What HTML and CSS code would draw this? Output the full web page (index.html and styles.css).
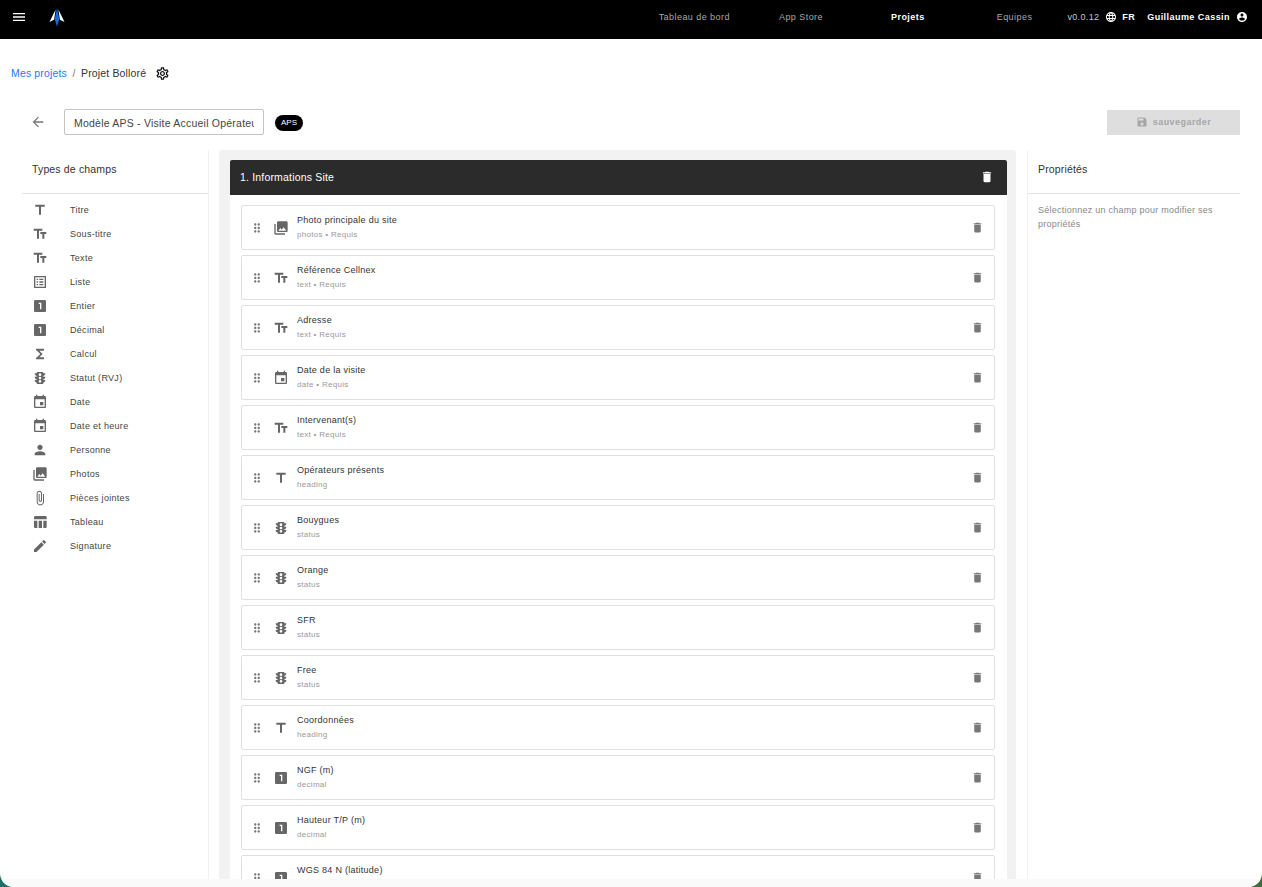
FILE: index.html
```html
<!DOCTYPE html>
<html lang="fr">
<head>
    <meta charset="UTF-8">
    <title>Projet Bolloré</title>
    <link rel="stylesheet" href="styles.css">
</head>
<body>
    <svg class="sprite" width="0" height="0">
        <symbol id="i-title" viewBox="0 0 24 24"><path d="M5 4v3h5.5v12h3V7H19V4z"/></symbol>
        <symbol id="i-text" viewBox="0 0 24 24"><path d="M2.5 4v3h5v12h3V7h5V4h-13zm19 5h-9v3h3v7h3v-7h3V9z"/></symbol>
        <symbol id="i-list" viewBox="0 0 24 24"><path d="M19 5v14H5V5h14m1.1-2H3.9c-.5 0-.9.4-.9.9v16.2c0 .4.4.9.9.9h16.2c.4 0 .9-.5.9-.9V3.9c0-.5-.5-.9-.9-.9zM11 7h6v2h-6V7zm0 4h6v2h-6v-2zm0 4h6v2h-6zM7 7h2v2H7zm0 4h2v2H7zm0 4h2v2H7z"/></symbol>
        <symbol id="i-one" viewBox="0 0 24 24"><path d="M19 3H5c-1.1 0-2 .9-2 2v14c0 1.1.9 2 2 2h14c1.1 0 2-.9 2-2V5c0-1.1-.9-2-2-2zm-5 14h-2V9h-2V7h4v10z"/></symbol>
        <symbol id="i-sum" viewBox="0 0 24 24"><path d="M18 4H6v2l6.5 6L6 18v2h12v-3h-7l5-5-5-5h7z"/></symbol>
        <symbol id="i-traffic" viewBox="0 0 24 24"><path d="M20 10h-3V8.86c1.72-.45 3-2 3-3.86h-3V4c0-.55-.45-1-1-1H8c-.55 0-1 .45-1 1v1H4c0 1.86 1.28 3.41 3 3.86V10H4c0 1.86 1.28 3.41 3 3.86V15H4c0 1.86 1.28 3.41 3 3.86V20c0 .55.45 1 1 1h8c.55 0 1-.45 1-1v-1.14c1.72-.45 3-2 3-3.86h-3v-1.14c1.72-.45 3-2 3-3.86zm-8 9c-1.11 0-2-.9-2-2s.89-2 2-2c1.1 0 2 .9 2 2s-.89 2-2 2zm0-5c-1.11 0-2-.9-2-2s.89-2 2-2c1.1 0 2 .9 2 2s-.89 2-2 2zm0-5c-1.11 0-2-.9-2-2 0-1.11.89-2 2-2 1.1 0 2 .89 2 2 0 1.1-.89 2-2 2z"/></symbol>
        <symbol id="i-event" viewBox="0 0 24 24"><path d="M17 12h-5v5h5v-5zM16 1v2H8V1H6v2H5c-1.11 0-1.99.9-1.99 2L3 19c0 1.1.89 2 2 2h14c1.1 0 2-.9 2-2V5c0-1.1-.9-2-2-2h-1V1h-2zm3 18H5V8h14v11z"/></symbol>
        <symbol id="i-person" viewBox="0 0 24 24"><path d="M12 12c2.21 0 4-1.79 4-4s-1.79-4-4-4-4 1.79-4 4 1.79 4 4 4zm0 2c-2.67 0-8 1.34-8 4v2h16v-2c0-2.66-5.33-4-8-4z"/></symbol>
        <symbol id="i-photos" viewBox="0 0 24 24"><path d="M22 16V4c0-1.1-.9-2-2-2H8c-1.1 0-2 .9-2 2v12c0 1.1.9 2 2 2h12c1.1 0 2-.9 2-2zm-11-4l2.03 2.71L16 11l4 5H8l3-4zM2 6v14c0 1.1.9 2 2 2h14v-2H4V6H2z"/></symbol>
        <symbol id="i-attach" viewBox="0 0 24 24"><path d="M16.5 6v11.5c0 2.21-1.79 4-4 4s-4-1.79-4-4V5c0-1.38 1.12-2.5 2.5-2.5s2.5 1.12 2.5 2.5v10.5c0 .55-.45 1-1 1s-1-.45-1-1V6H10v9.5c0 1.38 1.12 2.5 2.5 2.5s2.5-1.12 2.5-2.5V5c0-2.21-1.79-4-4-4S7 2.79 7 5v12.5c0 3.04 2.46 5.5 5.5 5.5s5.5-2.46 5.5-5.5V6h-1.5z"/></symbol>
        <symbol id="i-table" viewBox="0 0 24 24"><path d="M10 10.02h5V21h-5zM17 21h3c1.1 0 2-.9 2-2v-9h-5v11zm3-18H5c-1.1 0-2 .9-2 2v3h19V5c0-1.1-.9-2-2-2zM3 19c0 1.1.9 2 2 2h3V10H3v9z"/></symbol>
        <symbol id="i-pen" viewBox="0 0 24 24"><path d="M3 17.25V21h3.75L17.81 9.94l-3.75-3.75L3 17.25zM20.71 7.04c.39-.39.39-1.02 0-1.41l-2.34-2.34a.9959.9959 0 0 0-1.41 0l-1.83 1.83 3.75 3.75 1.83-1.83z"/></symbol>
        <symbol id="i-drag" viewBox="0 0 24 24"><path d="M11 18c0 1.1-.9 2-2 2s-2-.9-2-2 .9-2 2-2 2 .9 2 2zm-2-8c-1.1 0-2 .9-2 2s.9 2 2 2 2-.9 2-2-.9-2-2-2zm0-6c-1.1 0-2 .9-2 2s.9 2 2 2 2-.9 2-2-.9-2-2-2zm6 4c1.1 0 2-.9 2-2s-.9-2-2-2-2 .9-2 2 .9 2 2 2zm0 2c-1.1 0-2 .9-2 2s.9 2 2 2 2-.9 2-2-.9-2-2-2zm0 6c-1.1 0-2 .9-2 2s.9 2 2 2 2-.9 2-2-.9-2-2-2z"/></symbol>
        <symbol id="i-delete" viewBox="0 0 24 24"><path d="M6 19c0 1.1.9 2 2 2h8c1.1 0 2-.9 2-2V7H6v12zM19 4h-3.5l-1-1h-5l-1 1H5v2h14V4z"/></symbol>
    </svg>

    <div class="window">
        <header class="topbar">
            <svg class="menu-icon" viewBox="0 0 24 24"><path d="M3 18h18v-2H3v2zm0-5h18v-2H3v2zm0-7v2h18V6H3z"/></svg>
            <svg class="logo" viewBox="0 0 16 19">
                <path fill="#fff" d="M6.6 1.5 0.5 14l4.6-2.2z"/>
                <path fill="#fff" d="M9.4 1.5 15.5 14l-4.6-2.2z"/>
                <path fill="#1668e3" d="M8 0 10.3 11 8 18.5 5.7 11z"/>
            </svg>
            <nav class="nav-links">
                <a class="nav-link nav-dashboard">Tableau de bord</a>
                <a class="nav-link nav-store">App Store</a>
                <a class="nav-link nav-projects active">Projets</a>
                <a class="nav-link nav-teams">Equipes</a>
            </nav>
            <div class="user-area">
                <span class="version">v0.0.12</span>
                <svg class="user-icon" viewBox="0 0 24 24"><path d="M11.99 2C6.47 2 2 6.48 2 12s4.47 10 9.99 10C17.52 22 22 17.52 22 12S17.52 2 11.99 2zm6.93 6h-2.95c-.32-1.25-.78-2.45-1.38-3.56 1.84.63 3.37 1.91 4.33 3.56zM12 4.04c.83 1.2 1.48 2.53 1.91 3.96h-3.82c.43-1.43 1.08-2.76 1.91-3.96zM4.26 14C4.1 13.36 4 12.69 4 12s.1-1.36.26-2h3.38c-.08.66-.14 1.32-.14 2s.06 1.34.14 2H4.26zm.82 2h2.95c.32 1.25.78 2.45 1.38 3.56-1.84-.63-3.37-1.9-4.33-3.56zm2.95-8H5.08c.96-1.66 2.49-2.93 4.33-3.56C8.81 5.55 8.35 6.75 8.03 8zM12 19.96c-.83-1.2-1.48-2.53-1.91-3.96h3.82c-.43 1.43-1.08 2.76-1.91 3.96zM14.34 14H9.66c-.09-.66-.16-1.32-.16-2s.07-1.35.16-2h4.68c.09.65.16 1.32.16 2s-.07 1.34-.16 2zm.25 5.56c.6-1.11 1.06-2.31 1.38-3.56h2.95c-.96 1.65-2.49 2.93-4.33 3.56zM16.36 14c.08-.66.14-1.32.14-2s-.06-1.34-.14-2h3.38c.16.64.26 1.31.26 2s-.1 1.36-.26 2h-3.38z"/></svg>
                <span class="lang">FR</span>
                <span class="user-name">Guillaume Cassin</span>
                <svg class="user-icon" viewBox="0 0 24 24"><path d="M12 2C6.48 2 2 6.48 2 12s4.48 10 10 10 10-4.48 10-10S17.52 2 12 2zm0 3c1.66 0 3 1.34 3 3s-1.34 3-3 3-3-1.34-3-3 1.34-3 3-3zm0 14.2c-2.5 0-4.71-1.28-6-3.22.03-1.99 4-3.08 6-3.08 1.99 0 5.97 1.09 6 3.08-1.29 1.94-3.5 3.22-6 3.22z"/></svg>
            </div>
        </header>

        <div class="breadcrumb">
            <a class="crumb-link">Mes projets</a>
            <span class="crumb-sep">/</span>
            <span class="crumb-current">Projet Bolloré</span>
            <svg class="gear" viewBox="0 0 24 24"><path d="M19.43 12.98c.04-.32.07-.64.07-.98 0-.34-.03-.66-.07-.98l2.11-1.65c.19-.15.24-.42.12-.64l-2-3.46c-.09-.16-.26-.25-.44-.25-.06 0-.12.01-.17.03l-2.49 1c-.52-.4-1.08-.73-1.69-.98l-.38-2.65C14.46 2.18 14.25 2 14 2h-4c-.25 0-.46.18-.49.42l-.38 2.65c-.61.25-1.17.59-1.69.98l-2.49-1c-.06-.02-.12-.03-.18-.03-.17 0-.34.09-.43.25l-2 3.46c-.13.22-.07.49.12.64l2.11 1.65c-.04.32-.07.65-.07.98 0 .33.03.66.07.98l-2.11 1.65c-.19.15-.24.42-.12.64l2 3.46c.09.16.26.25.44.25.06 0 .12-.01.17-.03l2.49-1c.52.4 1.08.73 1.69.98l.38 2.65c.03.24.24.42.49.42h4c.25 0 .46-.18.49-.42l.38-2.65c.61-.25 1.17-.59 1.69-.98l2.49 1c.06.02.12.03.18.03.17 0 .34-.09.43-.25l2-3.46c.12-.22.07-.49-.12-.64l-2.11-1.65zm-1.98-1.71c.04.31.05.52.05.73 0 .21-.02.43-.05.73l-.14 1.13.89.7 1.08.84-.7 1.21-1.27-.51-1.04-.42-.9.68c-.43.32-.84.56-1.25.73l-1.06.43-.16 1.13-.2 1.35h-1.4l-.19-1.35-.16-1.13-1.06-.43c-.43-.18-.83-.41-1.23-.71l-.91-.7-1.06.43-1.27.51-.7-1.21 1.08-.84.89-.7-.14-1.13c-.03-.31-.05-.54-.05-.74s.02-.43.05-.73l.14-1.13-.89-.7-1.08-.84.7-1.21 1.27.51 1.04.42.9-.68c.43-.32.84-.56 1.25-.73l1.06-.43.16-1.13.2-1.35h1.39l.19 1.35.16 1.13 1.06.43c.43.18.83.41 1.23.71l.91.7 1.06-.43 1.27-.51.7 1.21-1.07.85-.89.7.14 1.13zM12 8c-2.21 0-4 1.79-4 4s1.79 4 4 4 4-1.79 4-4-1.79-4-4-4zm0 6c-1.1 0-2-.9-2-2s.9-2 2-2 2 .9 2 2-.9 2-2 2z"/></svg>
        </div>

        <div class="toolbar">
            <svg class="back-icon" viewBox="0 0 24 24"><path d="M20 11H7.83l5.59-5.59L12 4l-8 8 8 8 1.41-1.41L7.83 13H20v-2z"/></svg>
            <input class="name-input" type="text" value="Modèle APS - Visite Accueil Opérateur">
            <span class="chip">APS</span>
            <button class="save-btn" disabled>
                <svg class="save-icon" viewBox="0 0 24 24"><path d="M17 3H5c-1.11 0-2 .9-2 2v14c0 1.1.89 2 2 2h14c1.1 0 2-.9 2-2V7l-4-4zm-5 16c-1.66 0-3-1.34-3-3s1.34-3 3-3 3 1.34 3 3-1.34 3-3 3zm3-10H5V5h10v4z"/></svg>
                sauvegarder
            </button>
        </div>

        <div class="editor">
            <aside class="panel panel-left">
                <h2 class="panel-title">Types de champs</h2>
                <ul class="type-list">
                    <li class="type-item"><svg class="icon"><use href="#i-title"/></svg>Titre</li>
                    <li class="type-item"><svg class="icon"><use href="#i-text"/></svg>Sous-titre</li>
                    <li class="type-item"><svg class="icon"><use href="#i-text"/></svg>Texte</li>
                    <li class="type-item"><svg class="icon"><use href="#i-list"/></svg>Liste</li>
                    <li class="type-item"><svg class="icon"><use href="#i-one"/></svg>Entier</li>
                    <li class="type-item"><svg class="icon"><use href="#i-one"/></svg>Décimal</li>
                    <li class="type-item"><svg class="icon"><use href="#i-sum"/></svg>Calcul</li>
                    <li class="type-item"><svg class="icon"><use href="#i-traffic"/></svg>Statut (RVJ)</li>
                    <li class="type-item"><svg class="icon"><use href="#i-event"/></svg>Date</li>
                    <li class="type-item"><svg class="icon"><use href="#i-event"/></svg>Date et heure</li>
                    <li class="type-item"><svg class="icon"><use href="#i-person"/></svg>Personne</li>
                    <li class="type-item"><svg class="icon"><use href="#i-photos"/></svg>Photos</li>
                    <li class="type-item"><svg class="icon"><use href="#i-attach"/></svg>Pièces jointes</li>
                    <li class="type-item"><svg class="icon"><use href="#i-table"/></svg>Tableau</li>
                    <li class="type-item"><svg class="icon"><use href="#i-pen"/></svg>Signature</li>
                </ul>
            </aside>

            <main class="canvas">
                <section class="section">
                    <div class="section-head">
                        <span>1. Informations Site</span>
                        <svg class="icon section-delete"><use href="#i-delete"/></svg>
                    </div>
                    <div class="field-list">
                        <div class="field"><svg class="drag"><use href="#i-drag"/></svg><svg class="icon"><use href="#i-photos"/></svg><div class="field-text"><div class="field-name">Photo principale du site</div><div class="field-meta">photos • Requis</div></div><svg class="trash"><use href="#i-delete"/></svg></div>
                        <div class="field"><svg class="drag"><use href="#i-drag"/></svg><svg class="icon"><use href="#i-text"/></svg><div class="field-text"><div class="field-name">Référence Cellnex</div><div class="field-meta">text • Requis</div></div><svg class="trash"><use href="#i-delete"/></svg></div>
                        <div class="field"><svg class="drag"><use href="#i-drag"/></svg><svg class="icon"><use href="#i-text"/></svg><div class="field-text"><div class="field-name">Adresse</div><div class="field-meta">text • Requis</div></div><svg class="trash"><use href="#i-delete"/></svg></div>
                        <div class="field"><svg class="drag"><use href="#i-drag"/></svg><svg class="icon"><use href="#i-event"/></svg><div class="field-text"><div class="field-name">Date de la visite</div><div class="field-meta">date • Requis</div></div><svg class="trash"><use href="#i-delete"/></svg></div>
                        <div class="field"><svg class="drag"><use href="#i-drag"/></svg><svg class="icon"><use href="#i-text"/></svg><div class="field-text"><div class="field-name">Intervenant(s)</div><div class="field-meta">text • Requis</div></div><svg class="trash"><use href="#i-delete"/></svg></div>
                        <div class="field"><svg class="drag"><use href="#i-drag"/></svg><svg class="icon"><use href="#i-title"/></svg><div class="field-text"><div class="field-name">Opérateurs présents</div><div class="field-meta">heading</div></div><svg class="trash"><use href="#i-delete"/></svg></div>
                        <div class="field"><svg class="drag"><use href="#i-drag"/></svg><svg class="icon"><use href="#i-traffic"/></svg><div class="field-text"><div class="field-name">Bouygues</div><div class="field-meta">status</div></div><svg class="trash"><use href="#i-delete"/></svg></div>
                        <div class="field"><svg class="drag"><use href="#i-drag"/></svg><svg class="icon"><use href="#i-traffic"/></svg><div class="field-text"><div class="field-name">Orange</div><div class="field-meta">status</div></div><svg class="trash"><use href="#i-delete"/></svg></div>
                        <div class="field"><svg class="drag"><use href="#i-drag"/></svg><svg class="icon"><use href="#i-traffic"/></svg><div class="field-text"><div class="field-name">SFR</div><div class="field-meta">status</div></div><svg class="trash"><use href="#i-delete"/></svg></div>
                        <div class="field"><svg class="drag"><use href="#i-drag"/></svg><svg class="icon"><use href="#i-traffic"/></svg><div class="field-text"><div class="field-name">Free</div><div class="field-meta">status</div></div><svg class="trash"><use href="#i-delete"/></svg></div>
                        <div class="field"><svg class="drag"><use href="#i-drag"/></svg><svg class="icon"><use href="#i-title"/></svg><div class="field-text"><div class="field-name">Coordonnées</div><div class="field-meta">heading</div></div><svg class="trash"><use href="#i-delete"/></svg></div>
                        <div class="field"><svg class="drag"><use href="#i-drag"/></svg><svg class="icon"><use href="#i-one"/></svg><div class="field-text"><div class="field-name">NGF (m)</div><div class="field-meta">decimal</div></div><svg class="trash"><use href="#i-delete"/></svg></div>
                        <div class="field"><svg class="drag"><use href="#i-drag"/></svg><svg class="icon"><use href="#i-one"/></svg><div class="field-text"><div class="field-name">Hauteur T/P (m)</div><div class="field-meta">decimal</div></div><svg class="trash"><use href="#i-delete"/></svg></div>
                        <div class="field"><svg class="drag"><use href="#i-drag"/></svg><svg class="icon"><use href="#i-one"/></svg><div class="field-text"><div class="field-name">WGS 84 N (latitude)</div><div class="field-meta">decimal</div></div><svg class="trash"><use href="#i-delete"/></svg></div>
                    </div>
                </section>
            </main>

            <aside class="panel panel-right">
                <h2 class="panel-title">Propriétés</h2>
                <p class="panel-hint">Sélectionnez un champ pour modifier ses propriétés</p>
            </aside>
        </div>
        <div class="bottom-strip"></div>
    </div>
</body>
</html>
```

FILE: styles.css
```css
html, body {
    margin: 0;
    height: 100%;
    overflow: hidden;
}
body {
    font-family: "Liberation Sans", Arial, sans-serif;
    background: linear-gradient(90deg, #1f6f6b 0%, #1f6f6b 50%, #3f6f3f 50%, #3f6f3f 100%);
}
.sprite {
    display: block;
    height: 0;
}
.window {
    height: 887px;
    background: #fff;
    border-radius: 0 0 14px 14px;
    overflow: hidden;
    display: flex;
    flex-direction: column;
}
.bottom-strip {
    flex: none;
    height: 8px;
    background: #fafafa;
}

/* top bar */
.topbar {
    height: 39px;
    flex: none;
    background: #000;
    color: #fff;
    display: flex;
    align-items: center;
    padding: 0 14px 5px 11px;
    box-sizing: border-box;
}
.menu-icon {
    width: 16px;
    height: 16px;
    fill: #fff;
}
.logo {
    width: 16px;
    height: 19px;
    margin-left: 22px;
}
.nav-links {
    margin-left: auto;
    display: flex;
}
.nav-link {
    font-size: 9px;
    letter-spacing: 0.45px;
    color: #a8a8a8;
}
.nav-dashboard { margin-right: 49px; }
.nav-store { margin-right: 68px; }
.nav-projects { margin-right: 72px; }
.nav-teams { margin-right: 35px; }
.nav-link.active {
    color: #fff;
    font-weight: 700;
}
.user-area {
    display: flex;
    align-items: center;
    font-size: 9px;
    letter-spacing: 0.45px;
    color: #c8c8c8;
}
.version {
    letter-spacing: 0.35px;
}
.user-icon {
    width: 12px;
    height: 12px;
    fill: #fff;
    margin-left: 6px;
}
.lang {
    font-weight: 700;
    color: #fff;
    margin-left: 5px;
    margin-right: 12px;
}
.user-name {
    font-weight: 700;
    color: #fff;
}

/* breadcrumb */
.breadcrumb {
    flex: none;
    height: 16px;
    margin-top: 26px;
    padding-left: 11px;
    display: flex;
    align-items: center;
    font-size: 10.5px;
    letter-spacing: 0.15px;
    color: #333;
}
.crumb-link { color: #1a7cf0; }
.crumb-sep {
    margin: 0 5.5px;
    color: #777;
}
.gear {
    width: 15px;
    height: 15px;
    margin-left: 9px;
    fill: #111;
}

/* name + save */
.toolbar {
    flex: none;
    height: 26px;
    margin-top: 28px;
    padding: 0 22px 0 30px;
    display: flex;
    align-items: center;
}
.back-icon {
    width: 16px;
    height: 16px;
    fill: #777;
}
.name-input {
    width: 200px;
    height: 26px;
    margin-left: 18px;
    padding: 1px 9px 0;
    box-sizing: border-box;
    border: 1px solid #c4c4c4;
    border-radius: 2px;
    font-family: inherit;
    font-size: 10.5px;
    letter-spacing: 0.22px;
    color: #444;
}
.chip {
    margin-left: 11px;
    margin-top: 1px;
    width: 28px;
    height: 16px;
    line-height: 15px;
    border-radius: 8px;
    background: #000;
    color: #fff;
    font-size: 8px;
    text-align: center;
}
.save-btn {
    margin-left: auto;
    width: 133px;
    height: 25px;
    border: none;
    background: #dedede;
    color: #a6a6a6;
    font-family: inherit;
    font-size: 9px;
    font-weight: 700;
    letter-spacing: 0.45px;
    display: flex;
    align-items: center;
    justify-content: center;
}
.save-icon {
    width: 12px;
    height: 12px;
    margin-right: 5px;
    fill: #a6a6a6;
}

/* three columns */
.editor {
    flex: 1;
    min-height: 0;
    margin-top: 15px;
    padding: 0 22px;
    display: flex;
    gap: 11px;
    overflow: hidden;
}
.panel {
    background: #fff;
    border-right: 1px solid #f0f0f0;
    box-sizing: border-box;
}
.panel-left {
    width: 187px;
    flex: none;
}
.panel-right {
    width: 213px;
    flex: none;
    border-left: 1px solid #f0f0f0;
    border-right: none;
}
.panel-title {
    margin: 0;
    height: 44px;
    line-height: 39px;
    padding-left: 10px;
    box-sizing: border-box;
    border-bottom: 1px solid #e2e2e2;
    font-size: 10.5px;
    letter-spacing: 0.15px;
    font-weight: 400;
    color: #333;
}
.type-list {
    list-style: none;
    margin: 0;
    padding: 4px 0 0 10px;
}
.type-item {
    height: 24px;
    display: flex;
    align-items: center;
    gap: 22px;
    font-size: 9px;
    letter-spacing: 0.3px;
    color: #444;
}
.icon {
    width: 16px;
    height: 16px;
    flex: none;
    fill: #666;
}
.panel-hint {
    margin: 0;
    padding: 9px 10px;
    font-size: 9px;
    letter-spacing: 0.25px;
    line-height: 14px;
    color: #888;
}

/* middle */
.canvas {
    flex: 1;
    min-width: 0;
    background: #f2f2f2;
    border-radius: 3px 3px 0 0;
    padding: 10px 9px 0 11px;
    margin-left: -1px;
    overflow: hidden;
}
.section {
    background: #fff;
}
.section-head {
    height: 35px;
    background: #2b2b2b;
    color: #fff;
    display: flex;
    align-items: center;
    justify-content: space-between;
    padding: 0 13px 1px 10px;
    box-sizing: border-box;
    font-size: 10.5px;
    letter-spacing: 0.18px;
    border-radius: 2px 2px 0 0;
}
.section-delete {
    width: 14px;
    height: 14px;
    fill: #fff;
}
.field-list {
    padding: 10px 12px 0 11px;
    display: flex;
    flex-direction: column;
    gap: 5px;
}
.field {
    height: 45px;
    flex: none;
    box-sizing: border-box;
    border: 1px solid #e0e0e0;
    border-radius: 2px;
    display: flex;
    align-items: center;
    padding: 0 10px 0 8px;
}
.drag {
    width: 14px;
    height: 14px;
    flex: none;
    fill: #777;
}
.field .icon {
    margin-left: 9px;
}
.field-text {
    flex: 1;
    margin-left: 8px;
    padding-bottom: 1px;
}
.field-name {
    font-size: 9px;
    letter-spacing: 0.27px;
    line-height: 12px;
    color: #333;
}
.field-meta {
    margin-top: 4px;
    font-size: 8px;
    line-height: 10px;
    letter-spacing: 0.3px;
    color: #999;
}
.trash {
    width: 13px;
    height: 13px;
    flex: none;
    fill: #777;
}
```
